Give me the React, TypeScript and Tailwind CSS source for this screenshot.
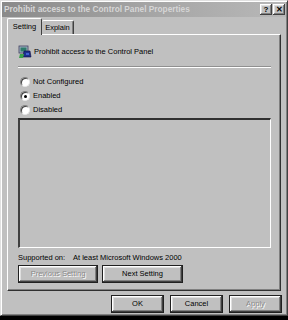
import React from "react";

const raised =
  "shadow-[inset_-1px_-1px_0_#404040,inset_1px_1px_0_#ffffff,inset_-2px_-2px_0_#808080,inset_2px_2px_0_#dfdfdf]";

function Radio({ checked, label }: { checked?: boolean; label: string }) {
  return (
    <div className="flex items-center h-[14px] gap-[3px]">
      <div className="relative w-[10px] h-[10px] rounded-full bg-white border border-t-[#808080] border-l-[#808080] border-b-[#e8e8e8] border-r-[#e8e8e8] shadow-[inset_1px_1px_0_#404040]">
        {checked && (
          <div className="absolute left-[2.5px] top-[2.5px] w-[3px] h-[3px] rounded-full bg-black" />
        )}
      </div>
      <span>{label}</span>
    </div>
  );
}

function Btn({
  label,
  disabled,
  className,
}: {
  label: string;
  disabled?: boolean;
  className?: string;
}) {
  return (
    <div
      className={
        "flex items-center justify-center bg-[#c0c0c0] border border-[#202020] " +
        raised +
        " " +
        (disabled ? "text-[#8a8a8a] [text-shadow:1px_1px_0_#ffffff] " : "text-black ") +
        (className ?? "")
      }
    >
      {label}
    </div>
  );
}

function PolicyIcon() {
  return (
    <svg width="14" height="14" viewBox="0 0 14 14">
      <rect x="1" y="1" width="9" height="7" fill="#9fb0c0" stroke="#404060" strokeWidth="0.8" />
      <rect x="2.5" y="2.5" width="6" height="4" fill="#2d7a6a" />
      <path d="M6 6 L12 6 L13 12 L5 12 Z" fill="#1c2f8c" stroke="#0a0a40" strokeWidth="0.6" />
      <path d="M2 9 L6 9 L5 13 L1 13 Z" fill="#3aa04a" />
      <rect x="8" y="8" width="3" height="2" fill="#4060d0" />
    </svg>
  );
}

export default function App() {
  return (
    <div className="w-[288px] h-[320px] bg-black overflow-hidden font-['Liberation_Sans',Arial,sans-serif] text-[7.5px] text-black leading-none">
      <div className="w-[288px] h-[316px] bg-[#c0c0c0] flex flex-col border-l border-l-[#e0e0e0] border-t border-t-[#e0e0e0] border-r border-r-[#404040] border-b border-b-[#404040] shadow-[inset_1px_1px_0_#ffffff,inset_-1px_-1px_0_#808080]">
        {/* title bar */}
        <div className="mx-[1px] mt-[1px] h-[15px] bg-linear-to-r from-[#8a8a8a] via-[#a4a4a4] to-[#b8b8b8] flex items-center justify-between pl-[2px] pr-[1px]">
          <span className="font-bold text-[8.3px] text-[#d6d6d6] whitespace-nowrap">
            Prohibit access to the Control Panel Properties
          </span>
          <div className="flex gap-[1px]">
            <div className={"w-[12px] h-[11px] bg-[#c0c0c0] flex items-center justify-center font-bold text-[8px] " + raised}>
              ?
            </div>
            <div className={"w-[12px] h-[11px] bg-[#c0c0c0] flex items-center justify-center font-bold text-[8px] " + raised}>
              ✕
            </div>
          </div>
        </div>

        {/* tabs */}
        <div className="flex items-end pl-[6px] h-[17px] mt-[0px]">
          <div className="relative z-10 h-[17px] w-[35px] flex items-center justify-center pb-[1px] border-t border-l border-t-white border-l-white border-r border-r-[#404040] rounded-t-[2px] bg-[#c0c0c0] -mb-[1px]">
            Setting
          </div>
          <div className="h-[14px] w-[32px] flex items-center justify-center border-t border-t-white border-r border-r-[#404040] rounded-t-[2px] shadow-[inset_-1px_0_0_#808080]">
            Explain
          </div>
        </div>

        {/* tab panel */}
        <div className="mx-[6px] h-[257px] border-t border-l border-t-white border-l-white border-r border-b border-r-[#303030] border-b-[#303030] shadow-[inset_-1px_-1px_0_#808080] flex flex-col pl-[10px] pr-[8px]">
          <div className="flex items-center gap-[2px] mt-[10px] h-[14px]">
            <PolicyIcon />
            <span>Prohibit access to the Control Panel</span>
          </div>
          <div className="mt-[7px] h-[2px] border-t border-t-[#909090] border-b border-b-white mr-[1px]" />
          <div className="mt-[7px] flex flex-col pl-[2px]">
            <Radio label="Not Configured" />
            <Radio checked label="Enabled" />
            <Radio label="Disabled" />
          </div>
          <div className="mt-[1px] h-[130px] mr-[1px] border-t-2 border-l-2 border-t-[#303030] border-l-[#404040] border-b border-r border-b-white border-r-white bg-[#c0c0c0]" />
          <div className="flex mt-[5px] h-[9px] items-center">
            <span className="w-[55px]">Supported on:</span>
            <span>At least Microsoft Windows 2000</span>
          </div>
          <div className="flex gap-[4px] mt-[3px]">
            <Btn label="Previous Setting" disabled className="w-[80px] h-[18px]" />
            <Btn label="Next Setting" className="w-[81px] h-[18px]" />
          </div>
        </div>

        {/* bottom buttons */}
        <div className="flex justify-end gap-[6px] pr-[5px] mt-[4px]">
          <Btn label="OK" className="w-[53px] h-[18px]" />
          <Btn label="Cancel" className="w-[53px] h-[18px]" />
          <Btn label="Apply" disabled className="w-[53px] h-[18px]" />
        </div>
      </div>
    </div>
  );
}
